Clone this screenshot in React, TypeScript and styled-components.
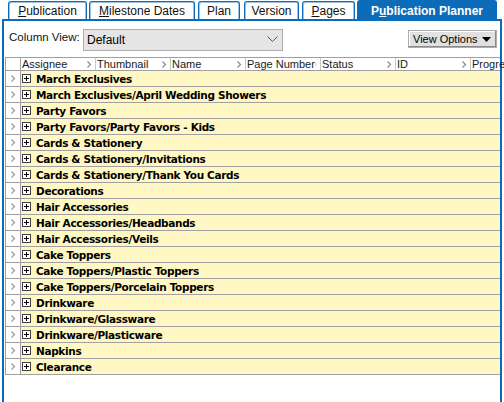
import React from "react";
import styled, { createGlobalStyle } from "styled-components";

const Global = createGlobalStyle`
  html, body { margin: 0; padding: 0; background: #fff; }
  body { font-family: "Liberation Sans", Arial, sans-serif; font-size: 11px; color: #000; }
  * { box-sizing: border-box; }
`;

const BLUE = "#0d6cb9";

const Page = styled.div`
  width: 504px;
  height: 402px;
  display: flex;
  flex-direction: column;
  overflow: hidden;
`;

const TabStrip = styled.div`
  height: 19px;
  display: flex;
  align-items: flex-end;
  padding-left: 8px;
  gap: 2px;
  flex: none;
`;

const Tab = styled.div<{ $w: number; $active?: boolean; $gap?: number }>`
  width: ${(p) => p.$w}px;
  margin-left: ${(p) => p.$gap ?? 0}px;
  height: ${(p) => (p.$active ? 19 : 18)}px;
  display: flex;
  align-items: center;
  justify-content: center;
  border: 1px solid ${BLUE};
  border-bottom: none;
  border-radius: 3px 3px 0 0;
  background: ${(p) => (p.$active ? BLUE : "#fff")};
  box-shadow: ${(p) => (p.$active ? "none" : "inset 1px 1px 0 #9cc4e8, inset -1px 0 0 #9cc4e8")};
  color: ${(p) => (p.$active ? "#fff" : "#111")};
  font-weight: ${(p) => (p.$active ? 700 : 400)};
  font-size: 12px;
  padding-top: 1px;
  white-space: nowrap;
  u { text-decoration: underline; text-underline-offset: 1px; }
`;

const Panel = styled.div`
  flex: 1;
  margin: 0 2px;
  border-top: 2px solid ${BLUE};
  border-left: 2px solid ${BLUE};
  border-right: 2px solid ${BLUE};
  display: flex;
  flex-direction: column;
`;

const Toolbar = styled.div`
  height: 36px;
  display: flex;
  align-items: center;
  padding: 0 0 0 5px;
  flex: none;
`;

const Label = styled.span`
  font-size: 11.5px;
  width: 74px;
  color: #111;
  margin-top: -4px;
`;

const Select = styled.div`
  width: 200px;
  height: 22px;
  background: #e5e5e5;
  border: 1px solid #adadad;
  display: flex;
  align-items: center;
  justify-content: space-between;
  padding: 0 4px 0 3px;
  font-size: 12px;
  margin-top: 1px;
`;

const Spacer = styled.div`
  flex: 1;
`;

const Button = styled.div`
  width: 89px;
  height: 18px;
  margin-right: 3px;
  background: #e1e1e1;
  border: 1px solid #adadad;
  box-shadow: inset -1px -1px 0 #8a8a8a, inset 1px 1px 0 #fff;
  display: flex;
  align-items: center;
  justify-content: space-between;
  padding: 0 5px 0 4px;
  font-size: 11px;
  white-space: nowrap;
`;

const Grid = styled.div`
  margin-left: 1px;
  border-left: 1px solid #a0a0a0;
  display: flex;
  flex-direction: column;
`;

const HeaderRow = styled.div`
  display: flex;
  height: 14px;
  border-top: 1px solid #a0a0a0;
  border-bottom: 1px solid #a0a0a0;
`;

const RowHead = styled.div`
  width: 15px;
  flex: none;
  border-right: 1px solid #a0a0a0;
  display: flex;
  align-items: center;
  justify-content: center;
  background: #fff;
`;

const HeadCell = styled.div`
  width: 75px;
  flex: none;
  display: flex;
  align-items: center;
  justify-content: space-between;
  padding: 0 3px 0 1px;
  font-size: 11px;
  color: #1a1a1a;
  border-right: 1px solid #c8c8c8;
  overflow: hidden;
  white-space: nowrap;
  line-height: 11px;
`;

const Row = styled.div`
  display: flex;
  height: 16px;
  border-bottom: 1px solid #a0a0a0;
`;

const RowBody = styled.div`
  flex: 1;
  background: #fff8c4;
  display: flex;
  align-items: center;
  padding-left: 1px;
  gap: 5px;
`;

const PlusBox = styled.div`
  width: 9px;
  height: 9px;
  border: 1px solid #404040;
  position: relative;
  background: #fff;
  flex: none;
  &::before {
    content: "";
    position: absolute;
    left: 1px;
    top: 3px;
    width: 5px;
    height: 1px;
    background: #000;
  }
  &::after {
    content: "";
    position: absolute;
    left: 3px;
    top: 1px;
    width: 1px;
    height: 5px;
    background: #000;
  }
`;

const RowText = styled.span`
  font-family: "DejaVu Sans", sans-serif;
  font-weight: 700;
  font-size: 10.5px;
  color: #000;
  white-space: nowrap;
  letter-spacing: -0.34px;
`;

const Chevron = ({ color = "#9a9a9a" }: { color?: string }) => (
  <svg width="5" height="7" viewBox="0 0 5 7">
    <polyline points="0.5,0.5 3.5,3.5 0.5,6.5" fill="none" stroke={color} strokeWidth="1.2" />
  </svg>
);

const tabs: { label: React.ReactNode; w: number; gap?: number; active?: boolean }[] = [
  { label: <><u>P</u>ublication</>, w: 79 },
  { label: <><u>M</u>ilestone Dates</>, w: 106 },
  { label: <>Plan</>, w: 42, gap: 1 },
  { label: <>Version</>, w: 55, gap: 2 },
  { label: <><u>P</u>ages</>, w: 53, gap: 1 },
  { label: <>P<u>u</u>blication Planner</>, w: 140, active: true },
];

const columns = ["Assignee", "Thumbnail", "Name", "Page Number", "Status", "ID", "Progress"];

const rows = [
  "March Exclusives",
  "March Exclusives/April Wedding Showers",
  "Party Favors",
  "Party Favors/Party Favors - Kids",
  "Cards & Stationery",
  "Cards & Stationery/Invitations",
  "Cards & Stationery/Thank You Cards",
  "Decorations",
  "Hair Accessories",
  "Hair Accessories/Headbands",
  "Hair Accessories/Veils",
  "Cake Toppers",
  "Cake Toppers/Plastic Toppers",
  "Cake Toppers/Porcelain Toppers",
  "Drinkware",
  "Drinkware/Glassware",
  "Drinkware/Plasticware",
  "Napkins",
  "Clearance",
];

export default function App() {
  return (
    <Page>
      <Global />
      <TabStrip>
        {tabs.map((t, i) => (
          <Tab key={i} $w={t.w} $gap={t.gap} $active={t.active}>
            <span>{t.label}</span>
          </Tab>
        ))}
      </TabStrip>
      <Panel>
        <Toolbar>
          <Label>Column View:</Label>
          <Select>
            <span>Default</span>
            <svg width="11" height="7" viewBox="0 0 11 7">
              <polyline points="0.5,0.5 5.5,5.5 10.5,0.5" fill="none" stroke="#555" strokeWidth="1" />
            </svg>
          </Select>
          <Spacer />
          <Button>
            <span>View Options</span>
            <svg width="9" height="5" viewBox="0 0 9 5">
              <polygon points="0,0 9,0 4.5,5" fill="#000" />
            </svg>
          </Button>
        </Toolbar>
        <Grid>
          <HeaderRow>
            <RowHead />
            {columns.map((c, i) => (
              <HeadCell key={c}>
                <span>{c}</span>
                {i < columns.length - 1 && <Chevron color="#8a8a8a" />}
              </HeadCell>
            ))}
          </HeaderRow>
          {rows.map((r) => (
            <Row key={r}>
              <RowHead>
                <Chevron />
              </RowHead>
              <RowBody>
                <PlusBox />
                <RowText>{r}</RowText>
              </RowBody>
            </Row>
          ))}
        </Grid>
      </Panel>
    </Page>
  );
}
